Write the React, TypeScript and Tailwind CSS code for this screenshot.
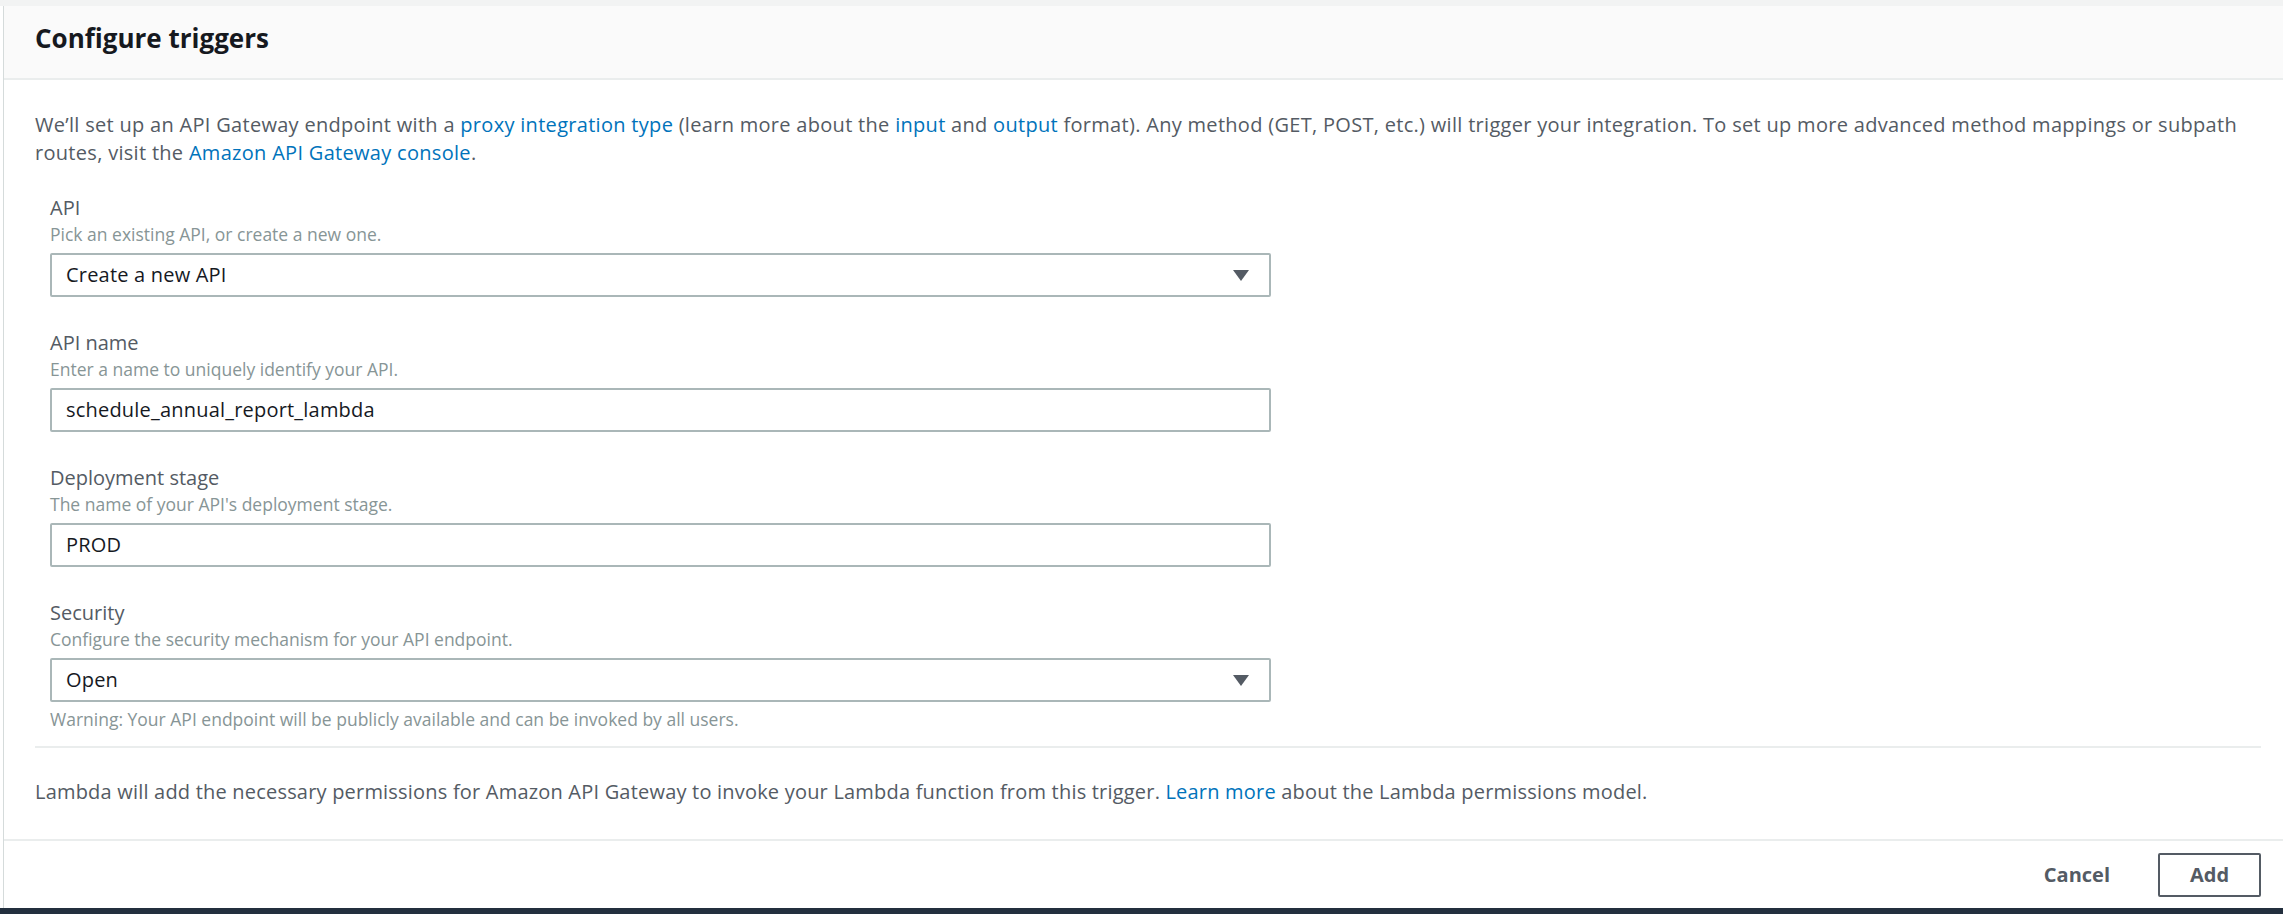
import React from 'react';

type Field = {
    label: string;
    hint: string;
    value: string;
    select?: boolean;
    note?: string;
};

const fields: Field[] = [
    { label: "API", hint: "Pick an existing API, or create a new one.", value: "Create a new API", select: true },
    { label: "API name", hint: "Enter a name to uniquely identify your API.", value: "schedule_annual_report_lambda" },
    { label: "Deployment stage", hint: "The name of your API's deployment stage.", value: "PROD" },
    {
        label: "Security",
        hint: "Configure the security mechanism for your API endpoint.",
        value: "Open",
        select: true,
        note: "Warning: Your API endpoint will be publicly available and can be invoked by all users.",
    },
];

function Caret() {
    return (
        <svg width="16" height="11" viewBox="0 0 16 11" className="shrink-0">
            <path d="M0 0 H16 L8 11 Z" fill="#545b64" />
        </svg>
    );
}

function Link({ children }: { children: React.ReactNode }) {
    return <a className="text-[#0073bb] cursor-pointer">{children}</a>;
}

export default function App() {
    return (
        <div className="min-h-screen bg-white font-['Open_Sans',sans-serif] text-[#545b64]">
            <div className="h-[6px] bg-[#f2f3f3]" />
            <div className="ml-[3px] border-l border-[#d5dbdb] flex flex-col">
                {/* Header */}
                <div className="h-[74px] bg-[#fafafa] border-b-2 border-[#eaeded] pl-[31px] pt-[16px]">
                    <h2 className="text-[26px] leading-[32px] font-bold text-[#16191f]">Configure triggers</h2>
                </div>

                {/* Body */}
                <div className="pl-[31px] pr-[22px] pt-[31px] pb-[33px]">
                    <p className="text-[20px] leading-[28px] tracking-[0.3px]">
                        We’ll set up an API Gateway endpoint with a <Link>proxy integration type</Link> (learn more about the <Link>input</Link> and <Link>output</Link> format). Any method (GET, POST, etc.) will trigger your integration. To set up more advanced method mappings or subpath routes, visit the <Link>Amazon API Gateway console</Link>.
                    </p>

                    <div className="pl-[15px] mt-[28px] flex flex-col gap-[33px]">
                        {fields.map((f) => (
                            <div key={f.label} className="flex flex-col">
                                <label className="text-[20px] leading-[26px] text-[#545b64]">{f.label}</label>
                                <span className="text-[17.5px] leading-[26px] text-[#879596]">{f.hint}</span>
                                <div className="mt-[6px] w-[1221px] h-[44px] border-2 border-[#aab7b8] rounded-[2px] flex items-center justify-between pl-[14px] pr-[20px] text-[20px] tracking-[0.2px] text-[#16191f]">
                                    <span>{f.value}</span>
                                    {f.select && <Caret />}
                                </div>
                                {f.note && (
                                    <span className="mt-[5px] text-[17.5px] leading-[24px] text-[#879596]">{f.note}</span>
                                )}
                            </div>
                        ))}
                    </div>

                    <div className="mt-[15px] border-t-2 border-[#eaeded]" />

                    <p className="mt-[30px] text-[20px] leading-[28px] tracking-[0.2px]">
                        Lambda will add the necessary permissions for Amazon API Gateway to invoke your Lambda function from this trigger. <Link>Learn more</Link> about the Lambda permissions model.
                    </p>
                </div>

                {/* Footer */}
                <div className="h-[69px] border-t-2 border-[#eaeded] flex items-center justify-end pr-[22px] gap-[16px]">
                    <button className="px-[32px] h-[44px] text-[20px] font-bold text-[#545b64]">Cancel</button>
                    <button className="w-[103px] h-[44px] border-2 border-[#545b64] rounded-[2px] text-[20px] font-bold text-[#545b64]">Add</button>
                </div>
            </div>
            <div className="h-[6px] bg-[#232f3e]" />
        </div>
    );
}
